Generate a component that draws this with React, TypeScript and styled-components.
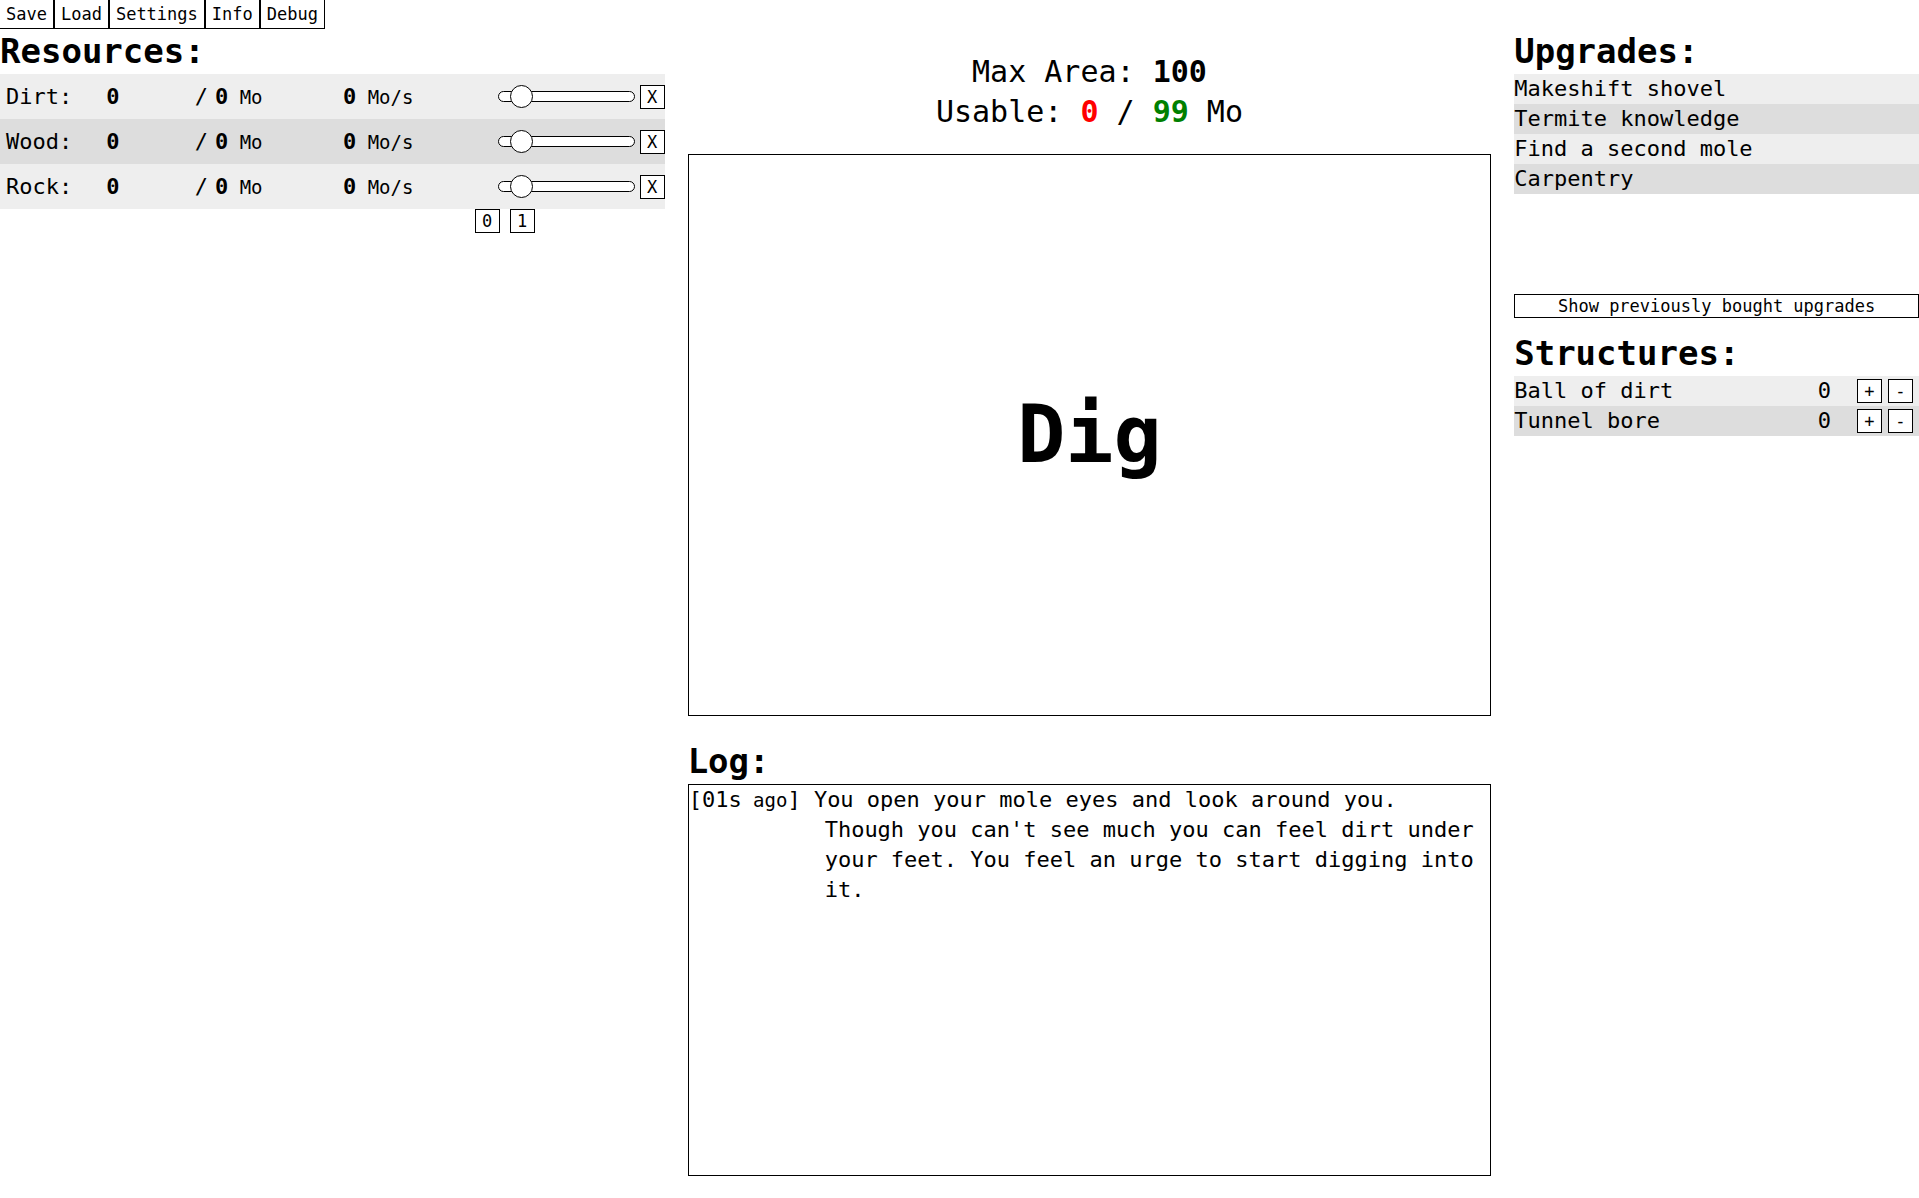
import React, { useState } from "react";
import styled, { createGlobalStyle } from "styled-components";

const GlobalStyle = createGlobalStyle`
  *, *::before, *::after { box-sizing: border-box; }
  body {
    margin: 0;
    background: #fff;
    color: #000;
    font: 22px/30px "DejaVu Sans Mono", "Liberation Mono", monospace;
  }
  button, input { font-family: inherit; color: inherit; }
`;

const Page = styled.div`
  display: flex;
  flex-direction: column;
  min-height: 100vh;
`;

const Menu = styled.nav`
  display: flex;
  height: 29px;
`;

const Button = styled.button`
  border: 1px solid #000;
  border-radius: 0;
  background: #fff;
  padding: 0 6px;
  font-size: 17px;
  line-height: 22px;
  cursor: pointer;
`;

const MenuButton = styled(Button)`
  border-top: none;
  &:first-child { border-left: none; }
`;

const SquareButton = styled(Button)`
  flex: none;
  width: 25px;
  height: 24px;
  padding: 0;
`;

const WideButton = styled(Button)`
  display: block;
  width: 100%;
  height: 24px;
  margin-bottom: 13px;
`;

const Columns = styled.div`
  flex: 1;
  display: grid;
  grid-template-columns: 665fr 804fr 405fr;
  column-gap: 23px;
`;

const Column = styled.section`
  min-width: 0;
`;

const MainColumn = styled.main`
  min-width: 0;
  display: flex;
  flex-direction: column;
  padding: 23px 0 22px;
`;

const Heading = styled.h2`
  margin: 0;
  font-size: 34px;
  line-height: 45px;
  font-weight: bold;
`;

const Small = styled.span`
  font-size: 19px;
`;

const ResourceTable = styled.table`
  width: 100%;
  table-layout: fixed;
  border-collapse: collapse;

  tr { height: 45px; background: #eee; }
  tr:nth-child(even) { background: #ddd; }
  th, td { padding: 0; text-align: left; white-space: pre; }
  th { padding-left: 6px; font-weight: normal; }
`;

const Col = styled.col<{ $share: number }>`
  width: ${(p) => p.$share}%;
`;

const Limit = styled.div`
  display: flex;
  align-items: baseline;
  gap: 7px;
  padding-left: 2px;
`;

const Rate = styled.div`
  padding-left: 4px;
`;

const Controls = styled.div`
  display: flex;
  align-items: center;
  justify-content: flex-end;
  gap: 5px;
`;

const Slider = styled.input`
  appearance: none;
  width: 137px;
  height: 23px;
  margin: 0;
  background: transparent;

  &::-webkit-slider-runnable-track {
    height: 11px;
    border: 1px solid #000;
    border-radius: 6px;
    background: #fff;
  }
  &::-webkit-slider-thumb {
    appearance: none;
    width: 23px;
    height: 23px;
    margin-top: -7px;
    border: 1px solid #000;
    border-radius: 50%;
    background: #fff;
  }
`;

const Presets = styled.div`
  display: flex;
  justify-content: flex-end;
  gap: 10px;
  padding-right: 130px;
`;

const Area = styled.div`
  font-size: 30px;
  line-height: 40px;
  text-align: center;
  margin-bottom: 22px;
`;

const Amount = styled.b<{ $color?: string }>`
  color: ${(p) => p.$color ?? "inherit"};
`;

const DigButton = styled(Button)`
  flex: 33 1 0;
  margin-bottom: 23px;
  font-size: 80px;
  line-height: 106px;
  font-weight: bold;
`;

const LogBox = styled.div`
  flex: 23 1 0;
  border: 1px solid #000;
  padding-right: 6px;
`;

const LogEntry = styled.p`
  margin: 0;
  padding-left: 136px;
  text-indent: -136px;
`;

const List = styled.ul<{ $minHeight?: number }>`
  list-style: none;
  margin: 0;
  padding: 0;
  min-height: ${(p) => p.$minHeight ?? 0}px;
`;

const Item = styled.li`
  display: flex;
  align-items: center;
  height: 30px;
  background: #eee;
  &:nth-child(even) { background: #ddd; }
`;

const UpgradeButton = styled.button`
  flex: 1;
  border: none;
  background: transparent;
  padding: 0;
  font-size: 22px;
  line-height: 30px;
  text-align: left;
  cursor: pointer;
`;

const StructureName = styled.span`
  flex: 1;
`;

const StructureButtons = styled.div`
  display: flex;
  gap: 6px;
  padding: 0 6px 0 26px;
`;

const menu = ["Save", "Load", "Settings", "Info", "Debug"];
const resources = ["Dirt", "Wood", "Rock"];
const upgrades = ["Makeshift shovel", "Termite knowledge", "Find a second mole", "Carpentry"];
const structures = ["Ball of dirt", "Tunnel bore"];
const columnShares = [16, 13, 22, 21, 28];

function ResourceRow({ name }: { name: string }) {
  const [value, setValue] = useState(1);
  return (
    <tr>
      <th scope="row">{name}:</th>
      <td><b>0</b></td>
      <td>
        <Limit>
          <span>/</span>
          <span><b>0</b><Small> Mo</Small></span>
        </Limit>
      </td>
      <td>
        <Rate><b>0</b><Small> Mo/s</Small></Rate>
      </td>
      <td>
        <Controls>
          <Slider
            type="range"
            min={0}
            max={10}
            value={value}
            aria-label={name}
            onChange={(e) => setValue(Number(e.target.value))}
          />
          <SquareButton>X</SquareButton>
        </Controls>
      </td>
    </tr>
  );
}

export default function App() {
  return (
    <Page>
      <GlobalStyle />
      <Menu>
        {menu.map((m) => <MenuButton key={m}>{m}</MenuButton>)}
      </Menu>
      <Columns>
        <Column>
          <Heading>Resources:</Heading>
          <ResourceTable>
            <colgroup>
              {columnShares.map((share, i) => <Col key={i} $share={share} />)}
            </colgroup>
            <tbody>
              {resources.map((r) => <ResourceRow key={r} name={r} />)}
            </tbody>
          </ResourceTable>
          <Presets>
            <SquareButton>0</SquareButton>
            <SquareButton>1</SquareButton>
          </Presets>
        </Column>

        <MainColumn>
          <Area>
            <div>Max Area: <Amount>100</Amount></div>
            <div>
              Usable: <Amount $color="#f00">0</Amount> / <Amount $color="#008000">99</Amount> Mo
            </div>
          </Area>
          <DigButton>Dig</DigButton>
          <Heading>Log:</Heading>
          <LogBox>
            <LogEntry>
              [01s<Small> ago</Small>] You open your mole eyes and look around you. Though you
              can't see much you can feel dirt under your feet. You feel an urge to start
              digging into it.
            </LogEntry>
          </LogBox>
        </MainColumn>

        <Column>
          <Heading>Upgrades:</Heading>
          <List $minHeight={220}>
            {upgrades.map((u) => (
              <Item key={u}><UpgradeButton>{u}</UpgradeButton></Item>
            ))}
          </List>
          <WideButton>Show previously bought upgrades</WideButton>
          <Heading>Structures:</Heading>
          <List>
            {structures.map((s) => (
              <Item key={s}>
                <StructureName>{s}</StructureName>
                <span>0</span>
                <StructureButtons>
                  <SquareButton>+</SquareButton>
                  <SquareButton>-</SquareButton>
                </StructureButtons>
              </Item>
            ))}
          </List>
        </Column>
      </Columns>
    </Page>
  );
}
